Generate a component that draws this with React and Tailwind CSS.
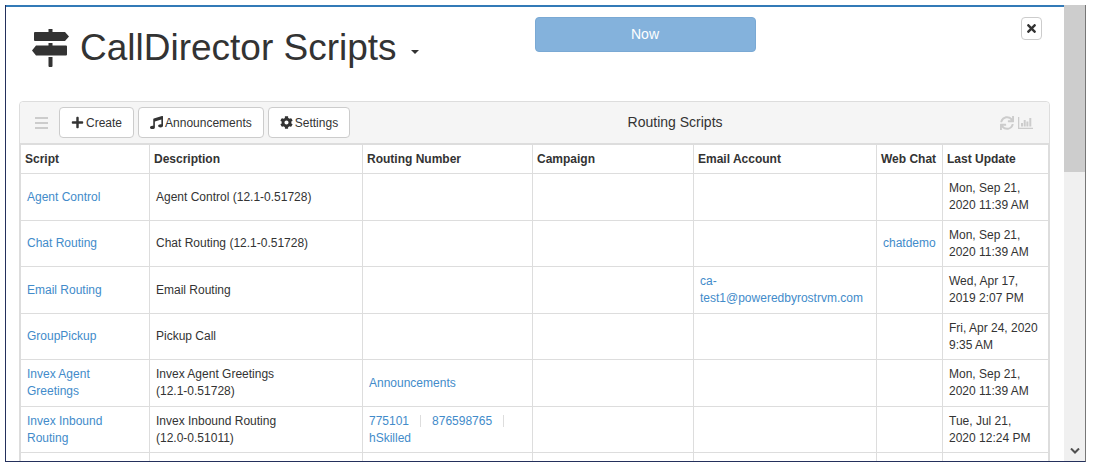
import React, { useState } from 'react';
import { FaSync, FaCog, FaPlus, FaTimes, FaMusic } from 'react-icons/fa';

const columns = [
  { label: 'Script', width: 'w-[129px]' },
  { label: 'Description', width: 'w-[213px]' },
  { label: 'Routing Number', width: 'w-[170px]' },
  { label: 'Campaign', width: 'w-[161px]' },
  { label: 'Email Account', width: 'w-[183px]' },
  { label: 'Web Chat', width: 'w-[66px]' },
  { label: 'Last Update', width: 'w-[106px]' }
];

const scripts = [
  { name: 'Agent Control', description: 'Agent Control', version: '(12.1-0.51728)', updated: 'Mon, Sep 21, 2020 11:39 AM' },
  { name: 'Chat Routing', description: 'Chat Routing', version: '(12.1-0.51728)', chat: 'chatdemo', updated: 'Mon, Sep 21, 2020 11:39 AM' },
  { name: 'Email Routing', description: 'Email Routing', email: 'ca-test1@poweredbyrostrvm.com', updated: 'Wed, Apr 17, 2019 2:07 PM' },
  { name: 'GroupPickup', description: 'Pickup Call', updated: 'Fri, Apr 24, 2020 9:35 AM' },
  { name: 'Invex Agent Greetings', description: 'Invex Agent Greetings', version: '(12.1-0.51728)', numbers: ['Announcements'], updated: 'Mon, Sep 21, 2020 11:39 AM' },
  { name: 'Invex Inbound Routing', description: 'Invex Inbound Routing', version: '(12.0-0.51011)', numbers: ['775101', '876598765', 'hSkilled'], updated: 'Tue, Jul 21, 2020 12:24 PM' }
];

const SignpostIcon = () => (
  <svg viewBox="0 0 38 38" className="w-[38px] h-[38px]" fill="currentColor" aria-hidden="true">
    <path d="M16.500 0h4v3h-4zM3 3h30l4 4.500-4 4.500H3a1 1 0 0 1-1-1V4a1 1 0 0 1 1-1zM16.500 14h4v2.500h-4zM34 16.500a1 1 0 0 1 1 1v8a1 1 0 0 1-1 1H4L0 21.500l4-5zM16.500 28h4v9a1 1 0 0 1-1 1h-2a1 1 0 0 1-1-1z" />
  </svg>
);

const ChartIcon = () => (
  <svg viewBox="0 0 16 14" className="w-4 h-[14px]" fill="currentColor" aria-hidden="true">
    <path d="M0 1h1.300v10.700H15V13H0zM3 7h2v3.500H3zM5.700 4h2v6.500h-2zM8.400 5.500h2v5h-2zM11.300 2h2v8.500h-2z" />
  </svg>
);

const ToolbarButton = ({ icon: Icon, children }) => (
  <button className="flex items-center gap-[2px] h-[31px] px-[11px] rounded border border-[#ccc] bg-white text-[12px] whitespace-nowrap">
    <Icon className="w-[13px] h-[13px]" />
    {children}
  </button>
);

const Link = ({ children }) => (
  <a href="#" className="text-[#428bca] hover:underline">{children}</a>
);

const App = () => {
  const [open, setOpen] = useState(true);

  if (!open) return null;

  return (
    <div className="h-screen pt-[5px] pl-[5px] pr-[7px] pb-[7px] bg-white font-['Liberation_Sans',Arial,sans-serif] text-[#333]">
      <div className="h-full flex border-l border-r border-b border-[#24305c] border-r-[#777]">
        <div className="flex-1 min-w-0 overflow-hidden border-t-2 border-[#337ab7] pl-[13px] pr-[14px]">
          <header className="grid grid-cols-2 items-start h-[94px] pt-[10px]">
            <h1 className="flex items-center pl-[13px] pt-[9px] text-[37px] leading-[44px] whitespace-nowrap">
              <SignpostIcon />
              <span className="ml-[10px]">CallDirector Scripts</span>
              <button aria-label="Script menu" className="w-3 pt-2 ml-3 flex justify-center">
                <span className="border-x-4 border-t-4 border-x-transparent border-t-[#333]" />
              </button>
            </h1>
            <div className="flex items-start justify-between pr-2">
              <button className="w-[221px] h-[35px] rounded border border-[#7aa9d4] bg-[#84b2dc] text-white text-[14px]">
                Now
              </button>
              <button
                aria-label="Close"
                onClick={() => setOpen(false)}
                className="w-[21px] h-[23px] flex items-center justify-center rounded border border-[#ccc]"
              >
                <FaTimes className="w-[13px] h-[13px]" />
              </button>
            </div>
          </header>

          <section className="border border-[#ddd] rounded-t">
            <div className="flex items-center h-[42px] px-[15px] bg-[#f5f5f5] rounded-t border-b border-[#ddd]">
              <div className="flex items-center gap-1">
                <button aria-label="Menu" className="w-[13px] mr-[7px] space-y-[3px]">
                  <span className="block h-[2px] bg-[#ccc]" />
                  <span className="block h-[2px] bg-[#ccc]" />
                  <span className="block h-[2px] bg-[#ccc]" />
                </button>
                <ToolbarButton icon={FaPlus}>Create</ToolbarButton>
                <ToolbarButton icon={FaMusic}>Announcements</ToolbarButton>
                <ToolbarButton icon={FaCog}>Settings</ToolbarButton>
              </div>
              <h2 className="flex-1 text-center text-[14px]">Routing Scripts</h2>
              <div className="flex items-center gap-1 text-[#ccc]">
                <button aria-label="Refresh"><FaSync className="w-[14px] h-[14px]" /></button>
                <button aria-label="Chart"><ChartIcon /></button>
              </div>
            </div>

            <table className="w-full table-fixed border-collapse text-[12px] leading-[17px]">
              <thead>
                <tr className="h-[29px]">
                  {columns.map((column) => (
                    <th key={column.label} className={`${column.width} border border-[#ddd] px-1 text-left font-bold whitespace-nowrap`}>
                      {column.label}
                    </th>
                  ))}
                </tr>
              </thead>
              <tbody>
                {scripts.map((script) => (
                  <tr key={script.name} className="odd:h-[47px] even:h-[46px] *:border *:border-[#ddd] *:pl-[6px] *:pr-[9px]">
                    <td><Link>{script.name}</Link></td>
                    <td>
                      {script.description}{' '}
                      {script.version && <span className="whitespace-nowrap">{script.version}</span>}
                    </td>
                    <td>
                      {script.numbers?.map((number, i) => (
                        <React.Fragment key={number}>
                          {i > 0 && <span className="inline-block align-middle w-px h-3 mx-[11px] bg-[#ddd]" />}
                          <Link>{number}</Link>
                        </React.Fragment>
                      ))}
                    </td>
                    <td />
                    <td>{script.email && <Link>{script.email}</Link>}</td>
                    <td>{script.chat && <Link>{script.chat}</Link>}</td>
                    <td>{script.updated}</td>
                  </tr>
                ))}
                <tr className="h-[46px] *:border *:border-[#ddd]">
                  {columns.map((column) => <td key={column.label} />)}
                </tr>
              </tbody>
            </table>
          </section>
        </div>

        {/* Scrollbar */}
        <div className="w-[21px] flex flex-col items-center justify-between bg-[#f0f0f0]">
          <div className="w-full h-[167px] bg-[#cdcdcd]" />
          <svg viewBox="0 0 10 6" className="w-[10px] h-[6px] mb-[7px]" fill="none" stroke="#505050" strokeWidth="2" aria-hidden="true">
            <path d="M1 .5l4 4 4-4" />
          </svg>
        </div>
      </div>
    </div>
  );
};

export default App;
